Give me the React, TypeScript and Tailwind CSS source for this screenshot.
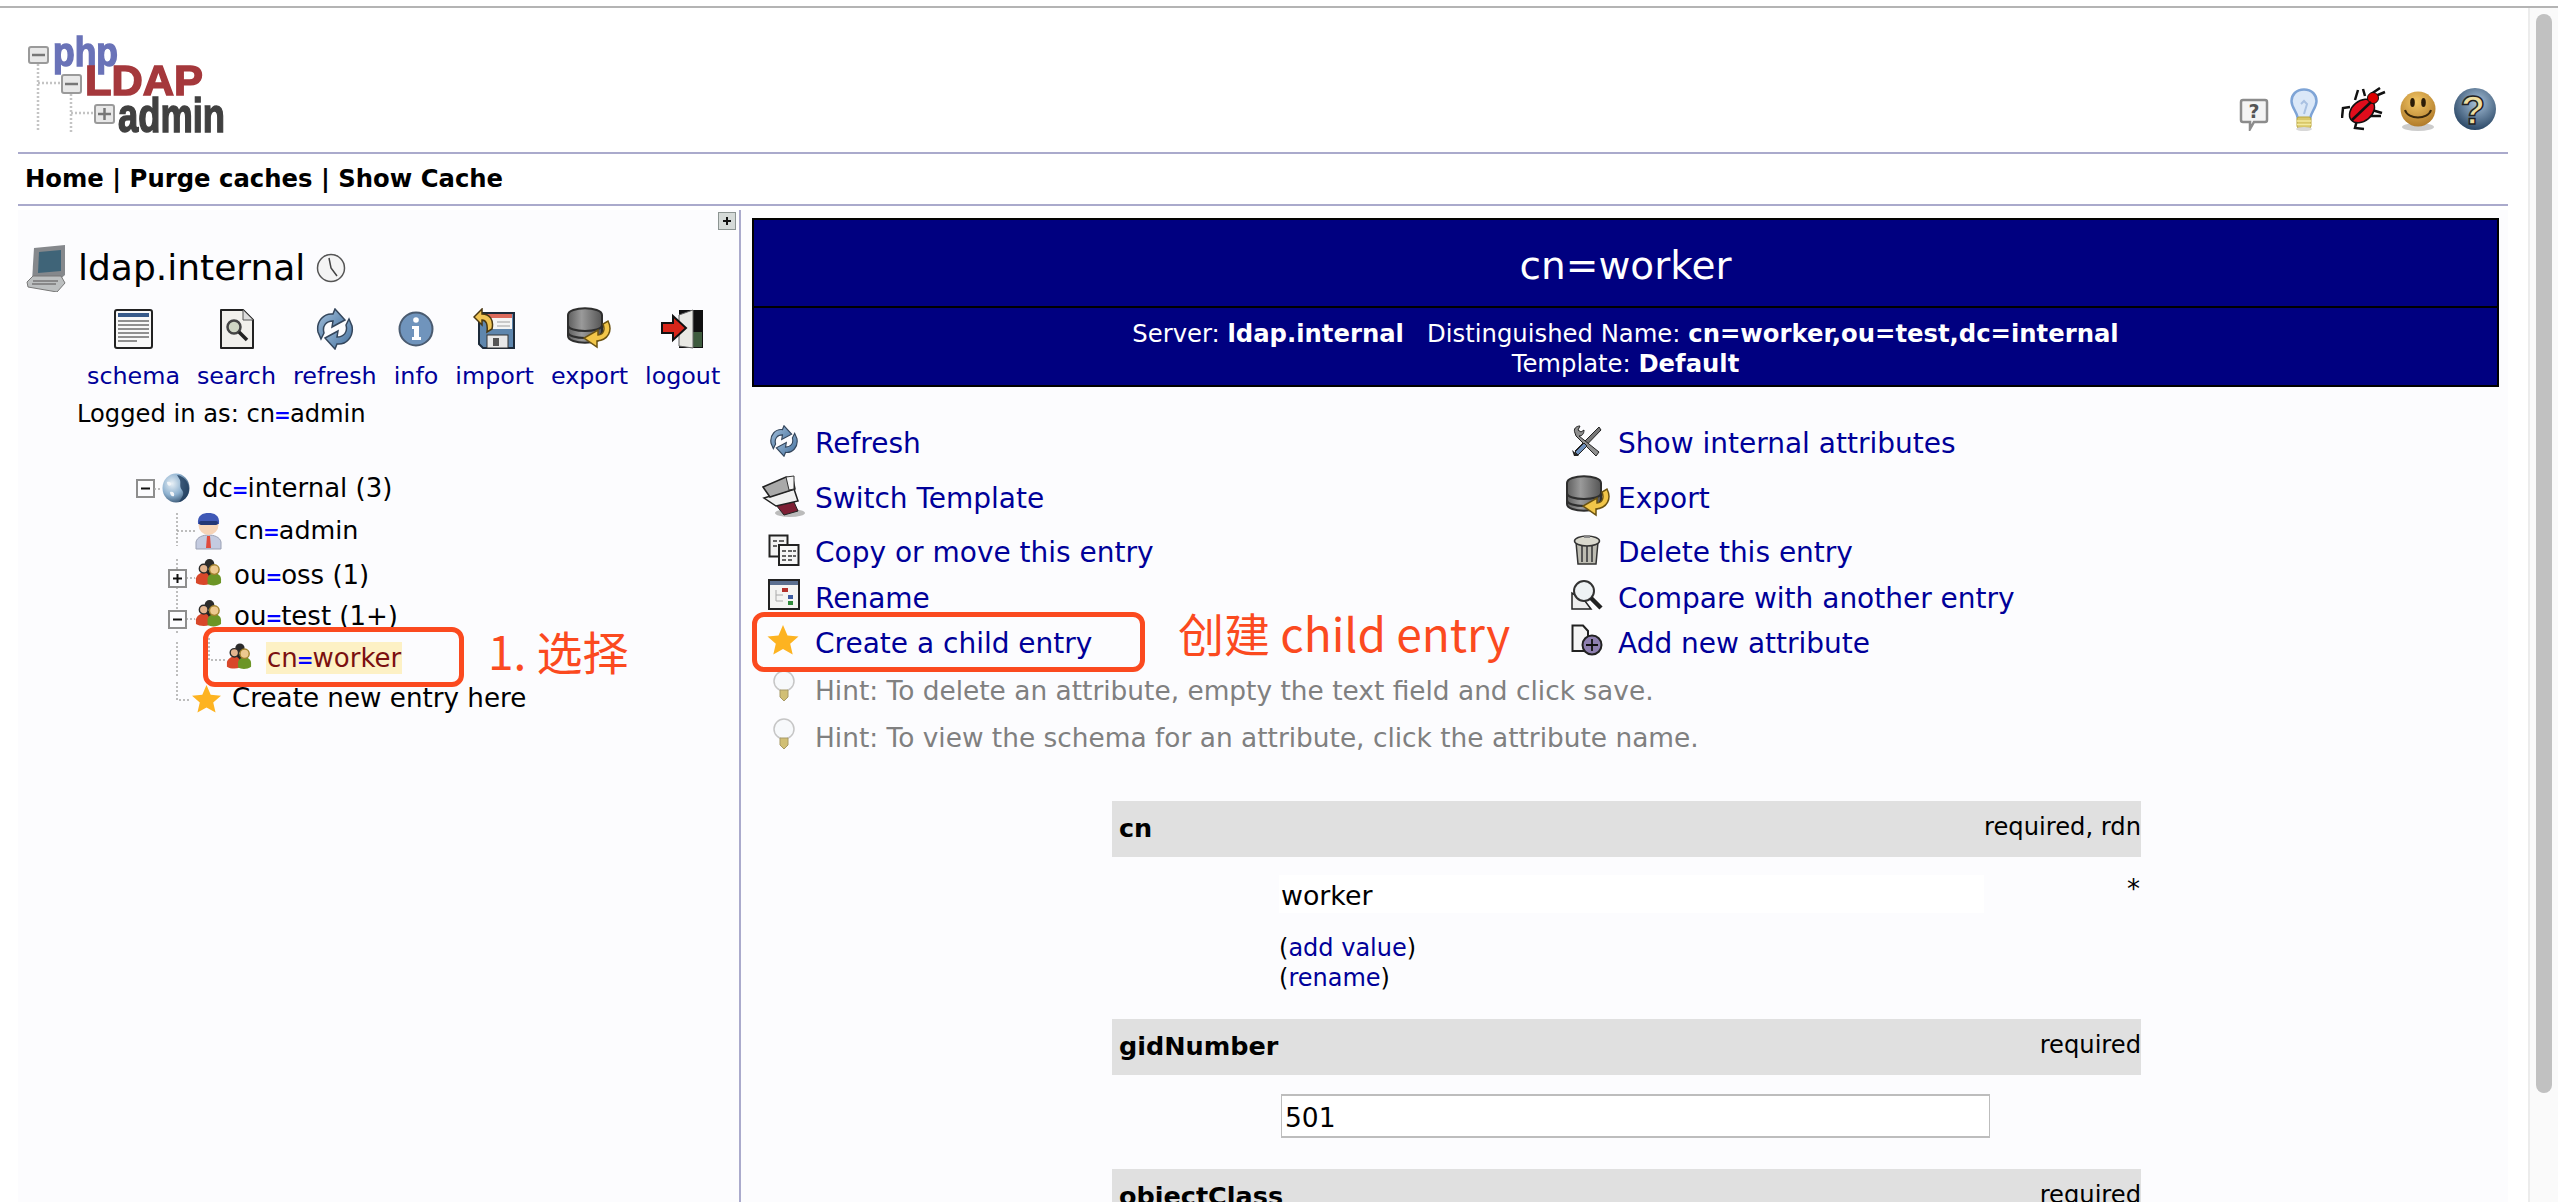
import React from 'react';

type IconProps = { className?: string };

const Eq: React.FC = () => <span className="text-[#0000ff] font-bold text-[20px] -mx-[1px]">=</span>;

const BlueGrad: React.FC<{ id: string }> = ({ id }) => (
  <defs>
    <linearGradient id={id} x1="0" y1="0" x2="1" y2="1">
      <stop offset="0" stopColor="#a9c4de" />
      <stop offset="1" stopColor="#3f6d9c" />
    </linearGradient>
  </defs>
);

const Logo: React.FC = () => (
  <svg viewBox="0 0 220 110" className="w-[220px] h-[110px] blur-[0.6px] overflow-visible">
    <g stroke="#c4c4c4" strokeWidth="2.5" strokeDasharray="2 2" fill="none">
      <path d="M18 34V102M18 53H42M51 64V102M51 83H75" />
    </g>
    <g fill="#e8e8e8" stroke="#9a9a9a" strokeWidth="2">
      <rect x="9" y="17" width="19" height="16" rx="2" />
      <rect x="42" y="45" width="19" height="18" rx="2" />
      <rect x="75" y="75" width="19" height="18" rx="2" />
    </g>
    <path d="M12 25H25M45 54H58" stroke="#777" strokeWidth="2.5" />
    <path d="M78 84H91M84.500 78V90" stroke="#777" strokeWidth="2.5" />
    <text x="33" y="36" fontFamily="Liberation Sans" fontWeight="700" fontSize="41" fill="#6a73b8" stroke="#6a73b8" strokeWidth="1.5" textLength="65" lengthAdjust="spacingAndGlyphs">php</text>
    <text x="65" y="65" fontFamily="Liberation Sans" fontWeight="700" fontSize="42" fill="#a5383c" stroke="#a5383c" strokeWidth="1.5" textLength="118" lengthAdjust="spacingAndGlyphs">LDAP</text>
    <text x="98" y="102" fontFamily="Liberation Sans" fontWeight="700" fontSize="48" fill="#404040" stroke="#404040" strokeWidth="1.5" textLength="107" lengthAdjust="spacingAndGlyphs">admin</text>
  </svg>
);

const BubbleHelp: React.FC<IconProps> = ({ className }) => (
  <svg viewBox="0 0 30 33" className={className}>
    <path d="M4 2H26Q28 2 28 4V22Q28 24 26 24H15L11 31V24H4Q2 24 2 22V4Q2 2 4 2Z" fill="#f4f4f4" stroke="#8c8c8c" strokeWidth="2.5" />
    <text x="15" y="20" textAnchor="middle" fontSize="19" fontWeight="700" fontFamily="DejaVu Sans" fill="#555">?</text>
  </svg>
);

const BigBulb: React.FC<IconProps> = ({ className }) => (
  <svg viewBox="0 0 28 43" className={className}>
    <path d="M14 1.500C6 1.500 1.500 7 1.500 13C1.500 20 7 23 8 31H20C21 23 26.500 20 26.500 13C26.500 7 22 1.500 14 1.500Z" fill="#dbe8f8" stroke="#7ea4d6" strokeWidth="2.500" />
    <path d="M11 16L14 13L17 16L14 26" fill="none" stroke="#a9c1e2" strokeWidth="2" />
    <rect x="7" y="29" width="14" height="11" rx="2" fill="#d9c768" stroke="#b9a53f" />
    <path d="M7 33H21M7 36.500H21" stroke="#f3ea9e" strokeWidth="1.500" />
    <ellipse cx="14" cy="41" rx="8" ry="2" fill="#d8d8d8" />
  </svg>
);

const Bug: React.FC<IconProps> = ({ className }) => (
  <svg viewBox="0 0 45 44" className={className}>
    <path d="M14 13L17 3M24 9L22 2M9 20L2 21L1 31M27 29L40 29M31 23L41 26M16 33L14 41L23 42M32 10L44 5M30 7L39 1" stroke="#111" strokeWidth="2.500" fill="none" />
    <ellipse cx="21" cy="24" rx="14" ry="10" transform="rotate(-40 21 24)" fill="#e00d1c" stroke="#111" strokeWidth="1.500" />
    <circle cx="32" cy="11" r="5.500" fill="#d00" stroke="#111" />
    <path d="M11 33L30 15" stroke="#111" strokeWidth="2.500" />
  </svg>
);

const Smile: React.FC<IconProps> = ({ className }) => (
  <svg viewBox="0 0 36 42" className={className}>
    <defs>
      <radialGradient id="smileg" cx="0.45" cy="0.3" r="0.8">
        <stop offset="0" stopColor="#f3c766" />
        <stop offset="1" stopColor="#a87122" />
      </radialGradient>
    </defs>
    <ellipse cx="18" cy="37" rx="16" ry="4" fill="#ccc" />
    <circle cx="18" cy="19" r="17.500" fill="url(#smileg)" />
    <ellipse cx="12.500" cy="12.500" rx="2.300" ry="4.500" fill="#2c1d08" />
    <ellipse cx="23.500" cy="12.500" rx="2.300" ry="4.500" fill="#2c1d08" />
    <path d="M5 20C8 30 28 30 31 20" fill="none" stroke="#3a280c" strokeWidth="2" />
  </svg>
);

const GlobeHelp: React.FC<IconProps> = ({ className }) => (
  <svg viewBox="0 0 44 44" className={className}>
    <defs>
      <radialGradient id="ghelp" cx="0.55" cy="0.35" r="0.7">
        <stop offset="0" stopColor="#a8c2da" />
        <stop offset="1" stopColor="#23405f" />
      </radialGradient>
    </defs>
    <circle cx="22" cy="22" r="21" fill="url(#ghelp)" />
    <text x="20" y="37" textAnchor="middle" fontSize="40" fontWeight="700" fontFamily="Liberation Sans" fill="#f0dfa0" stroke="#222" strokeWidth="1.500">?</text>
  </svg>
);

const Computer: React.FC<IconProps> = ({ className }) => (
  <svg viewBox="0 0 41 47" className={className}>
    <path d="M8 3L39 0V30L32 36H6Z" fill="#85888c" />
    <path d="M13 7L35 5V26L12 28Z" fill="#3f6478" />
    <path d="M1 37L7 31H35L39 38L31 47L2 42Z" fill="#bcbfc0" stroke="#777" />
    <path d="M7 36H32M6 39H30" stroke="#777" strokeWidth="1.500" />
  </svg>
);

const Clock: React.FC<IconProps> = ({ className }) => (
  <svg viewBox="0 0 30 30" className={className}>
    <circle cx="15" cy="15" r="13.500" fill="#f4f4f4" stroke="#555" strokeWidth="1.500" />
    <path d="M13 5L15 15L21 23" fill="none" stroke="#444" strokeWidth="1.500" />
  </svg>
);

const SchemaIcon: React.FC<IconProps> = ({ className }) => (
  <svg viewBox="0 0 41 42" className={className}>
    <rect x="2" y="2" width="37" height="38" rx="2" fill="#f8f8f8" stroke="#222" strokeWidth="2" />
    <rect x="5" y="5" width="31" height="4" fill="#375a8a" />
    <path d="M5 13H36M5 17H36M5 21H36M5 25H36M5 29H36M5 33H24" stroke="#8f8f8f" strokeWidth="2" />
  </svg>
);

const SearchIcon: React.FC<IconProps> = ({ className }) => (
  <svg viewBox="0 0 36 42" className={className}>
    <path d="M2 2H24L34 12V40H2Z" fill="#f1f0ec" stroke="#222" strokeWidth="2" strokeLinejoin="round" />
    <path d="M24 2V12H34" fill="#ddd" stroke="#555" />
    <circle cx="15" cy="19" r="6.500" fill="#cfd6c4" stroke="#444" strokeWidth="2.500" />
    <path d="M20 24L28 32" stroke="#222" strokeWidth="3.500" />
  </svg>
);

const RefreshIcon: React.FC<IconProps> = ({ className }) => (
  <svg viewBox="0 0 40 42" className={className}>
    <BlueGrad id="rfr" />
    <path d="M3 24C1 13 9 5 18 6L20 1L30 12L17 19L18 13C11 13 7 18 9 25L6 31Z" fill="url(#rfr)" stroke="#34465c" strokeWidth="1.500" />
    <path d="M37 18C39 29 31 37 22 36L20 41L10 30L23 23L22 29C29 29 33 24 31 17L34 11Z" fill="url(#rfr)" stroke="#34465c" strokeWidth="1.500" />
  </svg>
);

const InfoIcon: React.FC<IconProps> = ({ className }) => (
  <svg viewBox="0 0 36 42" className={className}>
    <circle cx="18" cy="21" r="16.500" fill="#7094bc" stroke="#4a5b70" strokeWidth="2" />
    <circle cx="18" cy="12" r="2.800" fill="#fff" />
    <path d="M14 18H21V29H23V32H14V29H16V21H14Z" fill="#fff" />
  </svg>
);

const ImportIcon: React.FC<IconProps> = ({ className }) => (
  <svg viewBox="0 0 43 42" className={className}>
    <path d="M6 5H41V40H10L6 36Z" fill="#5e86ad" stroke="#1c2a3a" strokeWidth="2" />
    <rect x="14" y="6" width="25" height="15" fill="#f4f4f4" />
    <rect x="14" y="6" width="25" height="4" fill="#db6a5c" />
    <path d="M24 14H37M24 18H37" stroke="#bbb" strokeWidth="1.500" />
    <rect x="14" y="27" width="21" height="13" fill="#e8e8e8" stroke="#333" />
    <rect x="20" y="30" width="6" height="8" fill="#555" />
    <path d="M1 9L9 1V6C17 6 21 12 19 21L14 24C15 16 13 12 9 12V17Z" fill="#efc455" stroke="#4a3710" strokeWidth="1.500" />
  </svg>
);

const DbIcon: React.FC<IconProps> = ({ className }) => (
  <svg viewBox="0 0 46 44" className={className}>
    <defs>
      <linearGradient id="dbg" x1="0" y1="0" x2="1" y2="0">
        <stop offset="0" stopColor="#5e5e5e" />
        <stop offset="0.4" stopColor="#9a9a9a" />
        <stop offset="1" stopColor="#555" />
      </linearGradient>
    </defs>
    <path d="M2 8C2 -1 36 -1 36 8V29C36 38 2 38 2 29Z" fill="url(#dbg)" stroke="#2e2e2e" strokeWidth="2" />
    <path d="M2 18C2 26 36 26 36 18M2 25C2 33 36 33 36 25" fill="none" stroke="#2e2e2e" strokeWidth="2" />
    <path d="M42 14C47 24 42 33 31 34L31 40L18 31L32 23V28C38 28 39 22 37 17Z" fill="#f2c649" stroke="#6b5312" strokeWidth="1.500" />
  </svg>
);

const LogoutIcon: React.FC<IconProps> = ({ className }) => (
  <svg viewBox="0 0 43 42" className={className}>
    <rect x="18" y="2" width="24" height="38" fill="#101010" />
    <rect x="30" y="24" width="11" height="15" fill="#3e5b3e" />
    <path d="M18 7L32 2V40L18 38Z" fill="#e9e9e4" stroke="#666" />
    <path d="M1 15H12V8L25 20L12 32V25H1Z" fill="#d8261a" stroke="#111" strokeWidth="2" />
  </svg>
);

const Globe: React.FC<IconProps> = ({ className }) => (
  <svg viewBox="0 0 28 30" className={className}>
    <defs>
      <radialGradient id="globeg" cx="0.35" cy="0.35" r="0.8">
        <stop offset="0" stopColor="#e8f0f6" />
        <stop offset="0.5" stopColor="#8fb2d0" />
        <stop offset="1" stopColor="#1e3a58" />
      </radialGradient>
    </defs>
    <ellipse cx="14" cy="15" rx="13.500" ry="14.500" fill="url(#globeg)" />
    <path d="M15 2C22 3 27 9 27 16C27 23 22 28 17 29C20 24 23 21 20 17C17 14 19 10 18 7Z" fill="#1f3c5c" opacity="0.8" />
    <path d="M5 9C8 8 10 10 9 12C7 14 5 12 5 9ZM8 19C11 18 13 20 12 23C10 24 8 22 8 19Z" fill="#f2f5f8" />
  </svg>
);

const Admin: React.FC<IconProps> = ({ className }) => (
  <svg viewBox="0 0 27 38" className={className}>
    <path d="M1 37V30C2 25 8 23 13.500 23C19 23 25 25 26 30V37Z" fill="#c4cbe0" stroke="#9aa0b4" />
    <path d="M12 24H15L16 36H11Z" fill="#e04a3c" />
    <ellipse cx="13.500" cy="13" rx="10" ry="10" fill="#f6d4b8" />
    <path d="M3 12C2 3 8 1 13.500 1C19 1 25 3 24 12Z" fill="#3f58b6" />
    <rect x="4" y="9" width="19" height="4" rx="2" fill="#223777" />
  </svg>
);

const Group: React.FC<IconProps> = ({ className }) => (
  <svg viewBox="0 0 28 29" className={className}>
    <circle cx="15" cy="6" r="5" fill="#2b2b2b" />
    <path d="M8 12H22V20H8Z" fill="#222" />
    <path d="M1 26V21C2 17 6 15 9 15C13 15 15 18 15 22V27C10 29 4 28 1 26Z" fill="#d8472a" />
    <circle cx="9" cy="11" r="4.500" fill="#e3b48f" stroke="#2c2c2c" strokeWidth="1.500" />
    <path d="M13 27V21C14 17 17 16 20 16C24 16 27 18 27 22V26C23 29 17 29 13 27Z" fill="#6c9526" />
    <circle cx="20" cy="12" r="5" fill="#edc98f" stroke="#a1822d" strokeWidth="1.500" />
  </svg>
);

const Star: React.FC<IconProps> = ({ className }) => (
  <svg viewBox="0 0 32 30" className={className}>
    <path d="M16 0L20.500 10.500L31.500 11.500L23.200 18.800L25.700 29.500L16 24L6.300 29.500L8.800 18.800L.5 11.500L11.500 10.500Z" fill="#fdb321" />
  </svg>
);

const TinyBulb: React.FC<IconProps> = ({ className }) => (
  <svg viewBox="0 0 24 32" className={className}>
    <circle cx="12" cy="11" r="10" fill="#f7f9fb" stroke="#c6c6c6" strokeWidth="1.500" />
    <path d="M8 20H16V27L12 31L8 27Z" fill="#d1bf75" stroke="#a89a66" />
  </svg>
);

const TemplateIcon: React.FC<IconProps> = ({ className }) => (
  <svg viewBox="0 0 44 44" className={className}>
    <ellipse cx="28" cy="38" rx="15" ry="4" fill="#bbb" />
    <path d="M14 30L32 27L36 36L22 40Z" fill="#7d1f34" stroke="#222" />
    <path d="M2 23L32 14L36 26L14 31Z" fill="#f0f0f0" stroke="#222" strokeWidth="1.500" />
    <path d="M1 12L24 2L31 4L33 14L8 22Z" fill="#a9a9a9" stroke="#222" strokeWidth="1.500" />
    <path d="M24 2L32 1V14L27 15Z" fill="#f4f4f4" stroke="#333" />
  </svg>
);

const CopyIcon: React.FC<IconProps> = ({ className }) => (
  <svg viewBox="0 0 32 32" className={className}>
    <rect x="1.500" y="1.500" width="18" height="21" fill="#f3f3f3" stroke="#222" strokeWidth="2" />
    <path d="M5 7H9M11 7H16M5 12H9M11 12H16" stroke="#666" strokeWidth="2" />
    <rect x="11" y="11" width="19.500" height="20" fill="#f7f7f7" stroke="#222" strokeWidth="2" />
    <path d="M14 17H18M20 17H24M25 17H28M14 22H18M20 22H24M25 22H28M14 26H18M20 26H24" stroke="#666" strokeWidth="2" />
  </svg>
);

const RenameIcon: React.FC<IconProps> = ({ className }) => (
  <svg viewBox="0 0 32 31" className={className}>
    <rect x="1" y="1" width="30" height="29" fill="#f4f4f2" stroke="#222" strokeWidth="2" />
    <rect x="2" y="2" width="28" height="4" fill="#5b6f8f" />
    <path d="M8 11V22H15M8 16H15" fill="none" stroke="#aaa" />
    <rect x="14" y="9" width="6" height="4" fill="#b3302a" />
    <rect x="20" y="16" width="5" height="4" fill="#3d5ca0" />
    <rect x="20" y="22" width="5" height="4" fill="#2f8a3a" />
  </svg>
);

const ToolsIcon: React.FC<IconProps> = ({ className }) => (
  <svg viewBox="0 0 31 32" className={className}>
    <path d="M28 2L4 26L7 29L30 5Z" fill="#777" stroke="#222" />
    <path d="M1 25L8 31L3 31Z" fill="#222" />
    <path d="M4 8C2 4 5 1 9 1L7 5L10 7L13 5C13 9 11 11 8 11L28 27L25 31L5 11Z" fill="#8f8f8f" stroke="#222" />
    <path d="M13 18L4 27L7 30L16 21Z" fill="#6d8fbb" stroke="#222" />
  </svg>
);

const TrashIcon: React.FC<IconProps> = ({ className }) => (
  <svg viewBox="0 0 28 32" className={className}>
    <path d="M3 8H25L23 30H5Z" fill="#bdbcb2" stroke="#333" strokeWidth="1.500" />
    <path d="M9 11V28M14 11V28M19 11V28" stroke="#555" strokeWidth="2" />
    <ellipse cx="14" cy="7" rx="12.500" ry="5" fill="#d9d8cd" stroke="#333" strokeWidth="1.500" />
    <rect x="11" y="1" width="6" height="3" fill="#888" />
  </svg>
);

const CompareIcon: React.FC<IconProps> = ({ className }) => (
  <svg viewBox="0 0 32 32" className={className}>
    <path d="M1 14V30H20L14 22Z" fill="#eee" stroke="#222" strokeWidth="1.500" />
    <circle cx="13" cy="12" r="10" fill="#eef2f4" stroke="#333" strokeWidth="2" />
    <path d="M20 19L30 29" stroke="#222" strokeWidth="4.500" />
  </svg>
);

const AddAttrIcon: React.FC<IconProps> = ({ className }) => (
  <svg viewBox="0 0 32 32" className={className}>
    <path d="M1.500 1.500H12L17 7V27H1.500Z" fill="#f5f5f5" stroke="#222" strokeWidth="2" />
    <circle cx="21" cy="21" r="9.500" fill="#8e7fb0" stroke="#222" strokeWidth="2" />
    <path d="M21 15V27M15 21H27" stroke="#111" strokeWidth="1.800" />
  </svg>
);

const Dot: React.FC<{ d: string }> = ({ d }) => (
  <path d={d} stroke="#a8a8a8" strokeWidth="1.500" strokeDasharray="2 2" fill="none" />
);

const TreeBox: React.FC<{ x: number; y: number; open: boolean }> = ({ x, y, open }) => (
  <g>
    <rect x={x} y={y} width="17" height="17" fill="#fcfcfe" stroke="#8e8e8e" strokeWidth="2" />
    <path d={`M${x + 4} ${y + 8.5}H${x + 13}`} stroke="#111" strokeWidth="2" />
    {!open && <path d={`M${x + 8.5} ${y + 4}V${y + 13}`} stroke="#111" strokeWidth="2" />}
  </g>
);

const TreeRow: React.FC<{ h: string; conn: React.ReactNode; w: number; height: number; children: React.ReactNode }> = ({ h, conn, w, height, children }) => (
  <div className={`flex items-center pl-[112px] ${h}`}>
    <svg width={w} height={height} className="shrink-0">{conn}</svg>
    {children}
  </div>
);

const ToolItem: React.FC<{ label: string; icon: React.ReactNode }> = ({ label, icon }) => (
  <a className="flex flex-col items-center text-[#000099]">
    <span className="h-[42px] flex items-center">{icon}</span>
    <span className="mt-[11px] leading-[30px]">{label}</span>
  </a>
);

const Action: React.FC<{ icon: React.ReactNode; label: string; cls?: string }> = ({ icon, label, cls }) => (
  <div className={`flex items-center ${cls ?? ''}`}>
    <span className="w-[63px] flex justify-center shrink-0">{icon}</span>
    <a className="text-[#000099] whitespace-nowrap">{label}</a>
  </div>
);

const AttrHeader: React.FC<{ name: string; note: string }> = ({ name, note }) => (
  <div className="h-[56px] shrink-0 bg-[#e0e0e0] flex justify-between items-center pl-[7px] text-[24.2px]">
    <b className="text-[25.5px] -mt-[2px]">{name}</b>
    <span className="-mt-[3px]">{note}</span>
  </div>
);

export default function App() {
  return (
    <div className="relative w-[2558px] h-[1202px] overflow-hidden bg-white flex flex-col text-[23.8px] text-black font-['DejaVu_Sans','Noto_Sans_CJK_SC',sans-serif]">
      <div className="h-[8px] shrink-0 border-b-2 border-[#b4b4b4]" />
      <div className="flex flex-1 min-h-0">
        <div className="flex-1 min-w-0 pl-[18px] pr-[20px] flex flex-col">
          {/* header */}
          <div className="h-[146px] shrink-0 border-b-2 border-[#aaaacc] flex justify-between pt-[22px] pl-[2px] pr-[11px]">
            <Logo />
            <div className="flex items-end pb-[21px]">
              <BubbleHelp className="w-[30px] h-[33px]" />
              <BigBulb className="w-[28px] h-[43px] ml-[21px]" />
              <Bug className="w-[45px] h-[44px] ml-[23px]" />
              <Smile className="w-[36px] h-[42px] ml-[14px] -mb-[1px]" />
              <GlobeHelp className="w-[44px] h-[44px] ml-[17px]" />
            </div>
          </div>
          <div className="h-[52px] shrink-0 border-b-2 border-[#aaaacc] flex items-center pl-[7px] font-bold text-[24.3px]">
            Home | Purge caches | Show Cache
          </div>
          <div className="flex flex-1 min-h-0 mt-[4px] bg-[#fcfcfe]">
            {/* left tree panel */}
            <div className="w-[723px] shrink-0 border-r-2 border-[#aaaacc] flex flex-col">
              <div className="flex justify-end pt-[2px] pr-[3px] h-[20px]">
                <svg width="18" height="18" className="shrink-0">
                  <rect x="0.5" y="0.5" width="17" height="17" fill="#d5dad8" stroke="#8c9492" />
                  <path d="M5 9H13M9 5V13" stroke="#111" strokeWidth="2" />
                </svg>
              </div>
              <div className="flex items-center h-[50px] mt-[13px] pl-[8px]">
                <Computer className="w-[41px] h-[47px]" />
                <span className="ml-[11px] text-[36px]">ldap.internal</span>
                <Clock className="w-[30px] h-[30px] ml-[11px]" />
              </div>
              <div className="flex gap-[17px] pl-[69px] mt-[15px]">
                <ToolItem label="schema" icon={<SchemaIcon className="w-[41px] h-[42px]" />} />
                <ToolItem label="search" icon={<SearchIcon className="w-[36px] h-[42px]" />} />
                <ToolItem label="refresh" icon={<RefreshIcon className="w-[40px] h-[42px]" />} />
                <ToolItem label="info" icon={<InfoIcon className="w-[36px] h-[42px]" />} />
                <ToolItem label="import" icon={<ImportIcon className="w-[43px] h-[42px]" />} />
                <ToolItem label="export" icon={<DbIcon className="w-[46px] h-[44px]" />} />
                <ToolItem label="logout" icon={<LogoutIcon className="w-[43px] h-[42px]" />} />
              </div>
              <div className="pl-[59px] mt-[8px] leading-[30px] text-[24.2px]">Logged in as: cn<Eq />admin</div>
              <div className="mt-[37px] text-[26px]">
                <TreeRow
                  h="h-[42px]"
                  w={32}
                  height={42}
                  conn={<><TreeBox x={7} y={13} open /><Dot d="M24 22H32" /></>}
                >
                  <Globe className="w-[28px] h-[30px]" />
                  <span className="ml-[12px]">dc<Eq />internal (3)</span>
                </TreeRow>
                <TreeRow
                  h="h-[43px]"
                  w={65}
                  height={43}
                  conn={<Dot d="M47 4V37M47 22H65" />}
                >
                  <Admin className="w-[27px] h-[38px]" />
                  <span className="ml-[12px] text-[25.4px]">cn<Eq />admin</span>
                </TreeRow>
                <TreeRow
                  h="h-[47px]"
                  w={65}
                  height={47}
                  conn={<><Dot d="M47 7V47M56 26H65" /><TreeBox x={39} y={18} open={false} /></>}
                >
                  <Group className="w-[27px] h-[28px] -mt-[8px]" />
                  <span className="ml-[12px]">ou<Eq />oss (1)</span>
                </TreeRow>
                <TreeRow
                  h="h-[35px]"
                  w={65}
                  height={35}
                  conn={<><Dot d="M47 0V35M56 20H65" /><TreeBox x={39} y={12} open /></>}
                >
                  <Group className="w-[27px] h-[28px] -mt-[7px]" />
                  <span className="ml-[12px]">ou<Eq />test (1+)</span>
                </TreeRow>
                <TreeRow
                  h="h-[48px]"
                  w={96}
                  height={48}
                  conn={<Dot d="M47 8V42M79 4V26H96" />}
                >
                  <Group className="w-[26px] h-[28px] -mt-[4px]" />
                  <span className="ml-[14px] px-[1px] h-[32px] leading-[32px] bg-[#fdf1c5] text-[#7b1010]">cn<Eq />worker</span>
                </TreeRow>
                <TreeRow
                  h="h-[34px]"
                  w={61}
                  height={34}
                  conn={<Dot d="M47 0V18H61" />}
                >
                  <Star className="w-[31px] h-[28px]" />
                  <span className="ml-[10px] text-[26.2px]">Create new entry here</span>
                </TreeRow>
              </div>
            </div>

            {/* entry panel */}
            <div className="flex-1 min-w-0 pl-[11px] pr-[9px] pt-[8px] flex flex-col">
              <div className="h-[169px] shrink-0 border-2 border-black bg-[#000080] text-white flex flex-col text-center">
                <div className="h-[88px] shrink-0 border-b-2 border-black flex items-center justify-center text-[39px] pt-[6px]">cn=worker</div>
                <div className="flex-1 flex flex-col justify-center leading-[30px] text-[24.3px] pt-[4px]">
                  <div>Server: <b>ldap.internal</b> &nbsp; Distinguished Name: <b>cn=worker,ou=test,dc=internal</b></div>
                  <div>Template: <b>Default</b></div>
                </div>
              </div>

              <div className="mt-[32px] text-[28px]">
                <div className="h-[50px] flex">
                  <Action cls="w-[803px]" icon={<RefreshIcon className="w-[32px] h-[32px] -mt-[6px]" />} label="Refresh" />
                  <Action icon={<ToolsIcon className="w-[31px] h-[32px] -mt-[6px]" />} label="Show internal attributes" />
                </div>
                <div className="h-[60px] flex">
                  <Action cls="w-[803px]" icon={<TemplateIcon className="w-[44px] h-[44px] -mt-[4px]" />} label="Switch Template" />
                  <Action icon={<DbIcon className="w-[46px] h-[46px] -mt-[4px] ml-[3px]" />} label="Export" />
                </div>
                <div className="h-[48px] flex">
                  <Action cls="w-[803px]" icon={<CopyIcon className="w-[32px] h-[32px] -mt-[6px]" />} label="Copy or move this entry" />
                  <Action icon={<TrashIcon className="w-[28px] h-[32px] -mt-[6px]" />} label="Delete this entry" />
                </div>
                <div className="h-[44px] flex">
                  <Action cls="w-[803px]" icon={<RenameIcon className="w-[32px] h-[31px] -mt-[10px]" />} label="Rename" />
                  <Action icon={<CompareIcon className="w-[32px] h-[32px] -mt-[8px]" />} label="Compare with another entry" />
                </div>
                <div className="h-[46px] flex">
                  <Action cls="w-[803px]" icon={<Star className="w-[32px] h-[30px] -mt-[9px] -ml-[2px]" />} label="Create a child entry" />
                  <Action icon={<AddAttrIcon className="w-[32px] h-[32px] -mt-[8px]" />} label="Add new attribute" />
                </div>
                <div className="h-[48px] flex items-center text-[#808080] text-[26.4px]">
                  <span className="w-[63px] flex justify-center"><TinyBulb className="w-[24px] h-[32px] -mt-[10px]" /></span>
                  Hint: To delete an attribute, empty the text field and click save.
                </div>
                <div className="h-[46px] flex items-center text-[#808080] text-[26.4px]">
                  <span className="w-[63px] flex justify-center"><TinyBulb className="w-[24px] h-[32px] -mt-[8px]" /></span>
                  Hint: To view the schema for an attribute, click the attribute name.
                </div>
              </div>

              {/* attribute table */}
              <div className="mt-[40px] ml-[360px] w-[1029px] flex flex-col">
                <AttrHeader name="cn" note="required, rdn" />
                <div className="h-[162px] shrink-0 flex justify-between text-[24px]">
                  <div className="pl-[167px] pt-[18px]">
                    <div className="w-[705px] h-[38px] bg-white flex items-center pl-[2px] pt-[5px] text-[26.8px]">worker</div>
                    <div className="mt-[20px] leading-[30px]">(<a className="text-[#000099]">add value</a>)</div>
                    <div className="leading-[30px]">(<a className="text-[#000099]">rename</a>)</div>
                  </div>
                  <span className="pt-[13px] pr-[1px] text-[26px]">*</span>
                </div>
                <AttrHeader name="gidNumber" note="required" />
                <div className="h-[94px] shrink-0 pl-[169px] pt-[19px]">
                  <input readOnly value="501" className="w-[709px] h-[44px] bg-white border border-[#bdbdbd] border-t-2 border-b-2 pl-[3px] pt-[2px] text-[26.5px] outline-none" />
                </div>
                <AttrHeader name="objectClass" note="required" />
              </div>
            </div>
          </div>
        </div>

        {/* page scrollbar */}
        <div className="w-[30px] shrink-0 bg-[#fafafa] border-l-2 border-[#ececec] pl-[6px] pt-[6px]">
          <div className="w-[16px] h-[1079px] rounded-full bg-[#c1c1c1]" />
        </div>
      </div>

      {/* annotations drawn over the screenshot */}
      <div className="absolute left-[203px] top-[627px] w-[261px] h-[60px] border-[5px] border-[#fb4a1f] rounded-[12px]" />
      <div className="absolute left-[488px] top-[620px] text-[46px] leading-[60px] text-[#fb4a1f] font-['Noto_Sans_CJK_SC',sans-serif]">1. 选择</div>
      <div className="absolute left-[752px] top-[612px] w-[393px] h-[60px] border-[5px] border-[#fb4a1f] rounded-[12px]" />
      <div className="absolute left-[1178px] top-[602px] text-[46px] leading-[60px] text-[#fb4a1f] font-['Noto_Sans_CJK_SC',sans-serif]">创建 child entry</div>
    </div>
  );
}
